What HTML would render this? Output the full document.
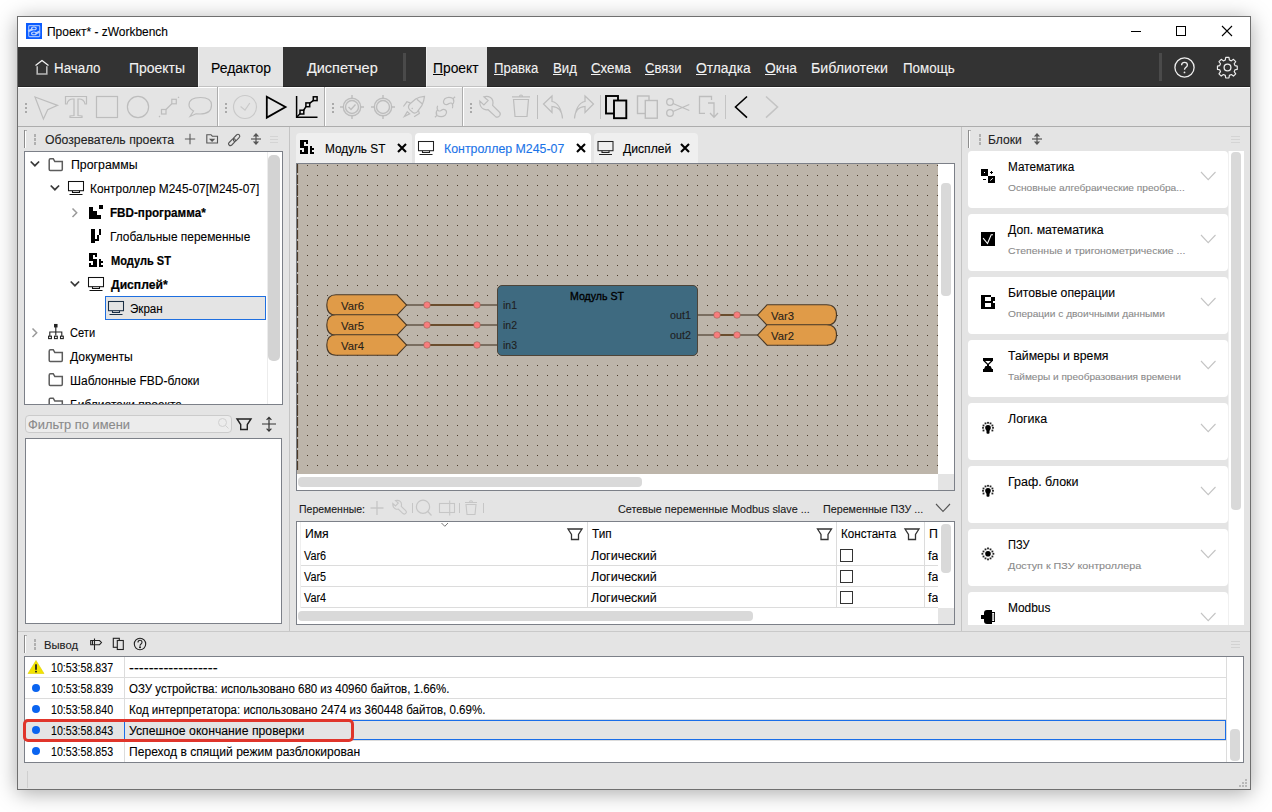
<!DOCTYPE html>
<html><head><meta charset="utf-8">
<style>
*{box-sizing:border-box;margin:0;padding:0}
html,body{width:1272px;height:812px;overflow:hidden;background:#fff;font-family:"Liberation Sans",sans-serif;color:#000}
.a{position:absolute}
.t{position:absolute;white-space:nowrap;line-height:1;-webkit-text-stroke:0.1px currentColor}
.b{-webkit-text-stroke:0.2px currentColor}
u{text-decoration:underline;text-underline-offset:1px;text-decoration-thickness:1px}
svg{position:absolute;overflow:visible}
</style></head><body>
<div class="a" style="left:17px;top:16px;width:1234px;height:774px;box-shadow:0 3px 20px rgba(0,0,0,0.34);background:#e4e4e4;border:1px solid #6f6f6f"></div>
<div class="a" style="left:18px;top:17px;width:1232px;height:30px;background:#fff;"></div>
<svg style="left:26px;top:23px;" width="16" height="16" viewBox="0 0 16 16"><rect x="0" y="0" width="16" height="16" fill="#0b5cff"/><rect x="2.7" y="2.6" width="11" height="11" rx="0.8" fill="none" stroke="#9fbfff" stroke-width="1.1"/><path d="M2.2 8.3 L6.5 6.3 M9.8 10.5 L13.8 8.6" stroke="#b7d0ff" stroke-width="2.2"/><ellipse cx="7.9" cy="5.4" rx="2.3" ry="1.4" fill="none" stroke="#c8dbff" stroke-width="1.1"/><ellipse cx="7.9" cy="10.4" rx="2.3" ry="1.4" fill="none" stroke="#c8dbff" stroke-width="1.1"/></svg>
<div class="t" style="left:47px;top:25.84px;font-size:12px;color:#000;transform:scaleX(0.9972);transform-origin:0 0;">Проект* - zWorkbench</div>
<div class="a" style="left:1131px;top:31px;width:10px;height:1px;background:#000;"></div>
<div class="a" style="left:1176px;top:26px;width:10px;height:10px;background:transparent;border:1px solid #000"></div>
<svg style="left:1222px;top:26px;" width="10" height="10" viewBox="0 0 10 10"><path d="M0 0L10 10M10 0L0 10" stroke="#000" stroke-width="1.1"/></svg>
<div class="a" style="left:18px;top:47px;width:1232px;height:40px;background:#333;border-bottom:1px solid #252525"></div>
<div class="a" style="left:198px;top:47px;width:85px;height:40px;background:#e4e4e4;border-bottom:1px solid #c2c2c2;border-left:1px solid #f0f0f0"></div>
<div class="a" style="left:426px;top:47px;width:61px;height:40px;background:#e4e4e4;border-bottom:1px solid #c2c2c2;border-left:1px solid #f0f0f0"></div>
<svg style="left:0px;top:0px;" width="1" height="1" viewBox="0 0 1 1"><path d="M35.5 65.5 L42 60.5 L48.5 65.5" fill="none" stroke="#f2f2f2" stroke-width="1.3" stroke-linejoin="round"/><path d="M37.2 66.3 L37.2 74 L46.8 74 L46.8 66.3" fill="none" stroke="#b8b8b8" stroke-width="1.6"/></svg>
<div class="t" style="left:54px;top:61.15px;font-size:14px;color:#f2f2f2;transform:scaleX(0.9532);transform-origin:0 0;">Начало</div>
<div class="t" style="left:129px;top:61.15px;font-size:14px;color:#f2f2f2;transform:scaleX(0.9967);transform-origin:0 0;">Проекты</div>
<div class="t" style="left:210.5px;top:61.15px;font-size:14px;color:#000;transform:scaleX(0.9956);transform-origin:0 0;">Редактор</div>
<div class="t" style="left:306.7px;top:61.15px;font-size:14px;color:#f2f2f2;transform:scaleX(1.0324);transform-origin:0 0;">Диспетчер</div>
<div class="a" style="left:403px;top:53px;width:3px;height:28px;background:#4a4a4a;"></div>
<div class="t" style="left:433px;top:61.15px;font-size:14px;color:#000;transform:scaleX(0.9886);transform-origin:0 0;"><u>П</u>роект</div>
<div class="t" style="left:494px;top:61.15px;font-size:14px;color:#f2f2f2;transform:scaleX(0.9366);transform-origin:0 0;"><u>П</u>равка</div>
<div class="t" style="left:553px;top:61.15px;font-size:14px;color:#f2f2f2;transform:scaleX(0.9397);transform-origin:0 0;"><u>В</u>ид</div>
<div class="t" style="left:591px;top:61.15px;font-size:14px;color:#f2f2f2;transform:scaleX(0.9489);transform-origin:0 0;"><u>С</u>хема</div>
<div class="t" style="left:645px;top:61.15px;font-size:14px;color:#f2f2f2;transform:scaleX(0.9307);transform-origin:0 0;"><u>С</u>вязи</div>
<div class="t" style="left:696px;top:61.15px;font-size:14px;color:#f2f2f2;transform:scaleX(0.9884);transform-origin:0 0;"><u>О</u>тладка</div>
<div class="t" style="left:765px;top:61.15px;font-size:14px;color:#f2f2f2;transform:scaleX(0.9832);transform-origin:0 0;"><u>О</u>кна</div>
<div class="t" style="left:811.3px;top:61.15px;font-size:14px;color:#f2f2f2;transform:scaleX(1.0150);transform-origin:0 0;">Библиотеки</div>
<div class="t" style="left:903.3px;top:61.15px;font-size:14px;color:#f2f2f2;transform:scaleX(0.9560);transform-origin:0 0;">Помощь</div>
<div class="a" style="left:1159px;top:53px;width:3px;height:28px;background:#4a4a4a;"></div>
<svg style="left:1174px;top:57px;" width="21" height="21" viewBox="0 0 21 21"><circle cx="10.5" cy="10.5" r="9.6" fill="none" stroke="#eee" stroke-width="1.3"/><path d="M7.6 8.2 Q7.6 5.3 10.5 5.3 Q13.4 5.3 13.4 8 Q13.4 9.6 11.6 10.6 Q10.5 11.3 10.5 12.8" fill="none" stroke="#eee" stroke-width="1.3"/><circle cx="10.5" cy="15.4" r="0.9" fill="#eee"/></svg>
<svg style="left:1217px;top:57px;" width="22" height="22" viewBox="0 0 22 22"><path d="M9.2 1 L12.8 1 L13.3 3.9 L15.4 4.8 L17.8 3.1 L20.3 5.6 L18.6 8 L19.5 10.1 L22 10.6 L22 14.2 L19.5 14.7 L18.6 16.8 L20.3 19.2 L17.8 21.7 L15.4 20 L13.3 20.9 L12.8 23.8 L9.2 23.8 L8.7 20.9 L6.6 20 L4.2 21.7 L1.7 19.2 L3.4 16.8 L2.5 14.7 L0 14.2 L0 10.6 L2.5 10.1 L3.4 8 L1.7 5.6 L4.2 3.1 L6.6 4.8 L8.7 3.9 Z" transform="scale(0.9) translate(0.5,-0.5)" fill="none" stroke="#eee" stroke-width="1.3" stroke-linejoin="round"/><circle cx="10.5" cy="10.5" r="3.4" fill="none" stroke="#eee" stroke-width="1.3"/></svg>
<div class="a" style="left:18px;top:87px;width:1232px;height:40px;background:#e4e4e4;border-top:1px solid #fff;border-bottom:1px solid #adadad"></div>
<div class="a" style="left:217px;top:87px;width:1px;height:39px;background:#adadad;"></div>
<div class="a" style="left:218px;top:87px;width:1px;height:39px;background:#fff;"></div>
<div class="a" style="left:324px;top:87px;width:1px;height:39px;background:#adadad;"></div>
<div class="a" style="left:325px;top:87px;width:1px;height:39px;background:#fff;"></div>
<div class="a" style="left:462px;top:87px;width:1px;height:39px;background:#adadad;"></div>
<div class="a" style="left:463px;top:87px;width:1px;height:39px;background:#fff;"></div>
<div class="a" style="left:25px;top:103px;width:2px;height:2px;background:#a9a9a9;"></div>
<div class="a" style="left:25px;top:107px;width:2px;height:2px;background:#a9a9a9;"></div>
<div class="a" style="left:25px;top:111px;width:2px;height:2px;background:#a9a9a9;"></div>
<div class="a" style="left:225px;top:103px;width:2px;height:2px;background:#a9a9a9;"></div>
<div class="a" style="left:225px;top:107px;width:2px;height:2px;background:#a9a9a9;"></div>
<div class="a" style="left:225px;top:111px;width:2px;height:2px;background:#a9a9a9;"></div>
<div class="a" style="left:332px;top:103px;width:2px;height:2px;background:#a9a9a9;"></div>
<div class="a" style="left:332px;top:107px;width:2px;height:2px;background:#a9a9a9;"></div>
<div class="a" style="left:332px;top:111px;width:2px;height:2px;background:#a9a9a9;"></div>
<div class="a" style="left:470px;top:103px;width:2px;height:2px;background:#a9a9a9;"></div>
<div class="a" style="left:470px;top:107px;width:2px;height:2px;background:#a9a9a9;"></div>
<div class="a" style="left:470px;top:111px;width:2px;height:2px;background:#a9a9a9;"></div>
<svg style="left:0px;top:0px;" width="1" height="1" viewBox="0 0 1 1"><g fill="none" stroke="#bdbdbd" stroke-width="1.2" stroke-linejoin="miter"><path d="M35 97 L57.5 105.4 L47.7 109.7 L43.4 119 Z"/></g></svg>
<svg style="left:0px;top:0px;" width="1" height="1" viewBox="0 0 1 1"><g fill="none" stroke="#bdbdbd" stroke-width="1.2" stroke-linejoin="miter"><path d="M65.5 104 L65.5 96.5 L86.5 96.5 L86.5 104 L85 104 Q84 99 79 99 L78 99 L78 115.5 L82 116 L82 117.5 L70 117.5 L70 116 L74 115.5 L74 99 L73 99 Q68 99 67 104 Z"/></g></svg>
<svg style="left:0px;top:0px;" width="1" height="1" viewBox="0 0 1 1"><g fill="none" stroke="#bdbdbd" stroke-width="1.2" stroke-linejoin="miter"><rect x="96.5" y="96.5" width="21" height="21"/></g></svg>
<svg style="left:0px;top:0px;" width="1" height="1" viewBox="0 0 1 1"><g fill="none" stroke="#bdbdbd" stroke-width="1.2" stroke-linejoin="miter"><circle cx="138" cy="107" r="10.6"/></g></svg>
<svg style="left:0px;top:0px;" width="1" height="1" viewBox="0 0 1 1"><g fill="none" stroke="#bdbdbd" stroke-width="1.2" stroke-linejoin="miter"><rect x="161.5" y="109.5" width="4.5" height="4.5"/><rect x="171.8" y="99.3" width="4.5" height="4.5"/><path d="M166 109.5 L171.8 103.8"/><path d="M159 117 L160 116 M178 97.8 L179 96.8"/></g></svg>
<svg style="left:0px;top:0px;" width="1" height="1" viewBox="0 0 1 1"><g fill="none" stroke="#bdbdbd" stroke-width="1.2" stroke-linejoin="miter"><path d="M190 116.5 L193.5 111 Q189 108.5 189 105 Q189 97.5 200.5 97.5 Q211.5 97.5 211.5 105 Q211.5 114 200 114 L196 113.8 Z"/></g></svg>
<svg style="left:0px;top:0px;" width="1" height="1" viewBox="0 0 1 1"><g fill="none" stroke="#c9c9c9" stroke-width="1.2" stroke-linejoin="miter"><circle cx="245" cy="107" r="11.5"/><path d="M240.6 106.5 L245 110.2 L249.8 103"/></g></svg>
<svg style="left:0px;top:0px;" width="1" height="1" viewBox="0 0 1 1"><g fill="none" stroke="#000" stroke-width="1.8" stroke-linejoin="miter"><path d="M266.8 96.8 L285.5 107 L266.8 117.6 Z"/></g></svg>
<svg style="left:0px;top:0px;" width="1" height="1" viewBox="0 0 1 1"><g fill="none" stroke="#000" stroke-width="1.5" stroke-linejoin="miter"><path d="M296.6 96 L296.6 117.2 L317.5 117.2"/><path d="M296.8 117 L300.3 113.5 M303.5 110.5 L306.3 106.2 M309.5 103.3 L313.5 100.3"/><rect x="300" y="110.2" width="3.8" height="3.8"/><rect x="305.9" y="102.9" width="3.8" height="3.8"/><rect x="313.3" y="96.8" width="3.8" height="3.8"/></g></svg>
<svg style="left:0px;top:0px;" width="1" height="1" viewBox="0 0 1 1"><g fill="none" stroke="#bdbdbd" stroke-width="1.4" stroke-linejoin="miter"><circle cx="352" cy="107" r="8.7"/><circle cx="352" cy="107" r="6.5"/><path d="M352 95 L352 98.3 M352 115.7 L352 119 M340 107 L343.3 107 M360.7 107 L364 107"/></g></svg>
<svg style="left:0px;top:0px;" width="1" height="1" viewBox="0 0 1 1"><g fill="none" stroke="#bdbdbd" stroke-width="1.4" stroke-linejoin="miter"><circle cx="383" cy="107" r="8.7"/><circle cx="383" cy="107" r="6.5"/><path d="M383 95 L383 98.3 M383 115.7 L383 119 M371 107 L374.3 107 M391.7 107 L395 107"/></g></svg>
<svg style="left:0px;top:0px;" width="1" height="1" viewBox="0 0 1 1"><g fill="none" stroke="#bdbdbd" stroke-width="1.4" stroke-linejoin="miter"><path d="M348.5 107 L351 109.5 L355.5 104.5"/></g></svg>
<svg style="left:0px;top:0px;" width="1" height="1" viewBox="0 0 1 1"><g fill="none" stroke="#bdbdbd" stroke-width="1.2" stroke-linejoin="miter"><path d="M424.5 96.4 Q419 96.8 415.6 99 L409.8 104 Q407.2 106.8 409.6 109.6 L412.6 112.3 Q415 114 417.2 111.8 L421.8 105.6 Q424 101.5 424.5 96.4 Z M416.9 99.2 L422.1 103.7 M411.8 107.8 L412.6 109 M403.4 106.5 L406.9 101.8 L410.2 102.9 M414.1 116.8 L419.3 113.4 L418.5 110.4 M404.3 116.6 L407.3 111.7 L409.7 113.8 Z"/></g></svg>
<svg style="left:0px;top:0px;" width="1" height="1" viewBox="0 0 1 1"><g fill="none" stroke="#bdbdbd" stroke-width="1.2" stroke-linejoin="miter"><path d="M455.1 96.8 L453.1 98.6 Q448.5 96 444.8 98.8 Q442.3 101.8 444.5 104 Q446.5 105.5 449 103.6 Q451.5 102 452.5 104.5 Q453.2 106.5 452.4 108.3 M453.1 98.6 Q454.8 101.5 452.5 104.5 M434.9 117.2 L436.9 115.4 Q441.5 118 445.2 115.2 Q447.7 112.2 445.5 110 Q443.5 108.5 441 110.4 Q438.5 112 437.5 109.5 Q436.8 107.5 437.6 105.7 M436.9 115.4 Q435.2 112.5 437.5 109.5"/></g></svg>
<svg style="left:0px;top:0px;" width="1" height="1" viewBox="0 0 1 1"><g fill="none" stroke="#bdbdbd" stroke-width="1.2" stroke-linejoin="miter"><path d="M483.9 96.8 L488.1 100.6 L483.9 104.9 L479.8 101.1 Q479.5 107 483.5 109 Q486 110.2 488.1 109.7 L495.3 116.4 Q498 118.2 499.8 115.5 Q501 113.5 499.3 112 L492.6 105.4 Q494 100 490.5 97.5 Q487.5 95.8 483.9 96.8 Z"/></g></svg>
<svg style="left:0px;top:0px;" width="1" height="1" viewBox="0 0 1 1"><g fill="none" stroke="#bdbdbd" stroke-width="1.2" stroke-linejoin="miter"><path d="M512 96.8 L530 96.8 M519.5 96.8 Q519.5 95 521 95 Q522.5 95 522.5 96.8 M513.5 99.5 L515 116.5 L527 116.5 L528.5 99.5 Z"/></g></svg>
<div class="a" style="left:537px;top:95px;width:1px;height:24px;background:#bdbdbd;"></div>
<svg style="left:0px;top:0px;" width="1" height="1" viewBox="0 0 1 1"><g fill="none" stroke="#bdbdbd" stroke-width="1.2" stroke-linejoin="miter"><path d="M562.5 118.5 Q562 107 552 106.5 L552 112.5 L543.5 104 L552 96 L552 101.5 Q560.5 103 562.5 118.5"/></g></svg>
<svg style="left:0px;top:0px;" width="1" height="1" viewBox="0 0 1 1"><g fill="none" stroke="#bdbdbd" stroke-width="1.2" stroke-linejoin="miter"><path d="M574.5 118.5 Q575 107 585 106.5 L585 112.5 L593.5 104 L585 96 L585 101.5 Q576.5 103 574.5 118.5"/></g></svg>
<div class="a" style="left:600px;top:95px;width:1px;height:24px;background:#c4c4c4;"></div>
<svg style="left:0px;top:0px;" width="1" height="1" viewBox="0 0 1 1"><g fill="none" stroke="#000" stroke-width="1.9" stroke-linejoin="miter"><rect x="606" y="96" width="12" height="17.5"/><rect x="614" y="100.5" width="12.3" height="17.7" fill="#e4e4e4"/></g></svg>
<svg style="left:0px;top:0px;" width="1" height="1" viewBox="0 0 1 1"><g fill="none" stroke="#bdbdbd" stroke-width="1.4" stroke-linejoin="miter"><rect x="637.5" y="96" width="11.5" height="17.5"/><rect x="645.3" y="100.5" width="12" height="17.7" fill="#e4e4e4"/></g></svg>
<svg style="left:0px;top:0px;" width="1" height="1" viewBox="0 0 1 1"><g fill="none" stroke="#bdbdbd" stroke-width="1.3" stroke-linejoin="miter"><circle cx="670" cy="102" r="3.3"/><circle cx="670" cy="113" r="3.3"/><path d="M673 103.5 L689.3 110.5 M673 111.5 L689.3 104.5"/></g></svg>
<svg style="left:0px;top:0px;" width="1" height="1" viewBox="0 0 1 1"><g fill="none" stroke="#bdbdbd" stroke-width="1.3" stroke-linejoin="miter"><path d="M711.5 100 L711.5 96.5 L699.5 96.5 L699.5 113.3 L705 113.3 M708 103 L714 103 L714 117 M710 113 L714 117.3 L718 113"/></g></svg>
<div class="a" style="left:725px;top:95px;width:1px;height:24px;background:#c4c4c4;"></div>
<svg style="left:0px;top:0px;" width="1" height="1" viewBox="0 0 1 1"><g fill="none" stroke="#000" stroke-width="1.6" stroke-linejoin="miter"><path d="M747 96.5 L735.5 107 L747 117.7"/></g></svg>
<svg style="left:0px;top:0px;" width="1" height="1" viewBox="0 0 1 1"><g fill="none" stroke="#c4c4c4" stroke-width="1.6" stroke-linejoin="miter"><path d="M766 96.5 L777.5 107 L766 117.7"/></g></svg>
<div class="a" style="left:24px;top:130px;width:1px;height:18px;background:#8c8c8c;"></div>
<div class="a" style="left:25px;top:131px;width:1px;height:17px;background:#fff;"></div>
<div class="a" style="left:25px;top:130px;width:2px;height:1px;background:#b0b0b0;"></div>
<div class="a" style="left:34px;top:134px;width:2px;height:3px;background:#b0b0b0;"></div>
<div class="a" style="left:34px;top:138px;width:2px;height:3px;background:#b0b0b0;"></div>
<div class="a" style="left:34px;top:142px;width:2px;height:3px;background:#b0b0b0;"></div>
<div class="t" style="left:44.6px;top:133.59px;font-size:12.3px;color:#222;transform:scaleX(0.9958);transform-origin:0 0;">Обозреватель проекта</div>
<svg style="left:0px;top:0px;" width="1" height="1" viewBox="0 0 1 1"><g fill="none" stroke="#5a5a5a" stroke-width="1.1" stroke-linejoin="miter"><path d="M190 133.7 L190 144.2 M184.9 139 L195.2 139"/></g></svg>
<svg style="left:0px;top:0px;" width="1" height="1" viewBox="0 0 1 1"><g fill="none" stroke="#555" stroke-width="1.1" stroke-linejoin="miter"><path d="M206.8 143 L206.8 134.7 L211 134.7 L212.3 136.2 L217.5 136.2 L217.5 143 Z"/><path d="M210.2 139.3 L214 139.3 L212.1 141.3 Z" fill="#444"/></g></svg>
<svg style="left:0px;top:0px;" width="1" height="1" viewBox="0 0 1 1"><g fill="none" stroke="#555" stroke-width="1.1" stroke-linejoin="miter"><path d="M233.5 138.2 L236.5 135 Q238 133.6 239.3 134.9 Q240.5 136.2 239.1 137.6 L236.2 140.6 Q234.8 142 233.5 140.6 Z M229.2 142.5 L232.2 139.3 Q233.6 137.9 234.9 139.2 Q236.2 140.5 234.8 141.9 L231.8 145 Q230.4 146.3 229.1 145 Q227.8 143.7 229.2 142.5 Z"/></g></svg>
<svg style="left:0px;top:0px;" width="1" height="1" viewBox="0 0 1 1"><g fill="none" stroke="#555" stroke-width="1.2" stroke-linejoin="miter"><path d="M251 139 L261 139"/><path d="M254.2 135.8 L256 133.8 L257.8 135.8 Z M254.2 142.2 L256 144.2 L257.8 142.2 Z" fill="#555"/><path d="M256 135.8 L256 142.2"/></g></svg>
<div class="a" style="left:270px;top:136px;width:8px;height:1px;background:#d4d4d4;"></div>
<div class="a" style="left:270px;top:139px;width:8px;height:1px;background:#d4d4d4;"></div>
<div class="a" style="left:270px;top:142px;width:8px;height:1px;background:#d4d4d4;"></div>
<div class="a" style="left:24px;top:151px;width:259px;height:254px;background:#fff;border:1px solid #7c8088"></div>
<div class="a" style="left:267px;top:152px;width:1px;height:252px;background:#ececec;"></div>
<div class="a" style="left:268px;top:155px;width:12px;height:206px;background:#d3d3d3;border-radius:5px"></div>
<svg style="left:0px;top:0px;" width="1" height="1" viewBox="0 0 1 1"><g fill="none" stroke="#3a3a3a" stroke-width="1.7" stroke-linejoin="miter"><path d="M30.7 161.5 L34.9 165.7 L39.1 161.5"/></g></svg>
<svg style="left:0px;top:0px;" width="1" height="1" viewBox="0 0 1 1"><g fill="none" stroke="#5c5c5c" stroke-width="1.5" stroke-linejoin="miter"><path d="M49.2 169.3 L49.2 160.2 Q49.2 158.7 50.5 158.7 L53.2 158.7 L54.8 161.4 L62.3 161.4 L62.3 169.3 Q62.3 170.4 61.3 170.4 L50.2 170.4 Q49.2 170.4 49.2 169.3 Z"/></g></svg>
<div class="t" style="left:70.7px;top:158.59px;font-size:12.3px;color:#000;transform:scaleX(1.0024);transform-origin:0 0;">Программы</div>
<svg style="left:0px;top:0px;" width="1" height="1" viewBox="0 0 1 1"><g fill="none" stroke="#3a3a3a" stroke-width="1.7" stroke-linejoin="miter"><path d="M50.7 185.5 L54.9 189.7 L59.1 185.5"/></g></svg>
<svg style="left:0px;top:0px;" width="1" height="1" viewBox="0 0 1 1"><g fill="none" stroke="#111" stroke-width="1.05" stroke-linejoin="miter"><rect x="68.5" y="181.5" width="15" height="9.2"/><path d="M72.5 190.8 L72.5 192.5 L79.5 192.5 L79.5 190.8 M69.5 194.5 L82.5 194.5"/></g></svg>
<div class="t" style="left:90.2px;top:182.59px;font-size:12.3px;color:#000;transform:scaleX(0.9658);transform-origin:0 0;">Контроллер M245-07[M245-07]</div>
<svg style="left:0px;top:0px;" width="1" height="1" viewBox="0 0 1 1"><g fill="none" stroke="#9a9a9a" stroke-width="1.5" stroke-linejoin="miter"><path d="M72.5 208.5 L76.7 212.8 L72.5 217.1"/></g></svg>
<svg style="left:89px;top:205px;" width="15" height="14" viewBox="0 0 15 14"><path d="M0 2 L4 2 L4 6 L8 6 L8 10 L12 10 L12 14 L0 14 Z M10 0 L14 0 L14 4 L10 4 Z" fill="#000"/></svg>
<div class="t b" style="left:110.4px;top:206.59px;font-size:12.3px;color:#000;font-weight:700;transform:scaleX(0.9480);transform-origin:0 0;">FBD-программа*</div>
<svg style="left:91px;top:229px;" width="10" height="14" viewBox="0 0 10 14"><rect x="0" y="0" width="4" height="14" fill="#000"/><rect x="8" y="0" width="2" height="6" fill="#000"/><rect x="6" y="6" width="2" height="6" fill="#000"/><rect x="4" y="10" width="2" height="2" fill="#000"/></svg>
<div class="t" style="left:110.4px;top:230.59px;font-size:12.3px;color:#000;transform:scaleX(0.9681);transform-origin:0 0;">Глобальные переменные</div>
<svg style="left:89px;top:253px;" width="15" height="14" viewBox="0 0 15 14"><rect x="0" y="0" width="8" height="2" fill="#000"/><rect x="0" y="2" width="4" height="2" fill="#000"/><rect x="6" y="2" width="2" height="2" fill="#000"/><rect x="0" y="4" width="4" height="2" fill="#000"/><rect x="0" y="6" width="8" height="2" fill="#000"/><rect x="4" y="8" width="4" height="2" fill="#000"/><rect x="0" y="10" width="2" height="2" fill="#000"/><rect x="4" y="10" width="4" height="2" fill="#000"/><rect x="0" y="12" width="8" height="2" fill="#000"/><rect x="10" y="6" width="2" height="8" fill="#000"/><rect x="12" y="8" width="2" height="2" fill="#000"/><rect x="12" y="12" width="2" height="2" fill="#000"/></svg>
<div class="t b" style="left:110.5px;top:254.59px;font-size:12.3px;color:#000;font-weight:700;transform:scaleX(0.8991);transform-origin:0 0;">Модуль ST</div>
<svg style="left:0px;top:0px;" width="1" height="1" viewBox="0 0 1 1"><g fill="none" stroke="#3a3a3a" stroke-width="1.7" stroke-linejoin="miter"><path d="M70.7 281.5 L74.9 285.7 L79.1 281.5"/></g></svg>
<svg style="left:0px;top:0px;" width="1" height="1" viewBox="0 0 1 1"><g fill="none" stroke="#111" stroke-width="1.05" stroke-linejoin="miter"><rect x="88.5" y="277.5" width="15" height="9.2"/><path d="M92.5 286.8 L92.5 288.5 L99.5 288.5 L99.5 286.8 M89.5 290.5 L102.5 290.5"/></g></svg>
<div class="t b" style="left:110.5px;top:278.59px;font-size:12.3px;color:#000;font-weight:700;transform:scaleX(0.9874);transform-origin:0 0;">Дисплей*</div>
<div class="a" style="left:105px;top:296px;width:161px;height:24px;background:#e4e4e4;border:1px solid #1e6fe0"></div>
<svg style="left:0px;top:0px;" width="1" height="1" viewBox="0 0 1 1"><g fill="none" stroke="#1b2f45" stroke-width="1.05" stroke-linejoin="miter"><rect x="108.5" y="301.5" width="15" height="9.2"/><path d="M112.5 310.8 L112.5 312.5 L119.5 312.5 L119.5 310.8 M109.5 314.5 L122.5 314.5"/></g></svg>
<div class="t" style="left:130px;top:302.59px;font-size:12.3px;color:#000;transform:scaleX(0.9427);transform-origin:0 0;">Экран</div>
<svg style="left:0px;top:0px;" width="1" height="1" viewBox="0 0 1 1"><g fill="none" stroke="#9a9a9a" stroke-width="1.5" stroke-linejoin="miter"><path d="M32.5 328.5 L36.7 332.8 L32.5 337.1"/></g></svg>
<svg style="left:0px;top:0px;" width="1" height="1" viewBox="0 0 1 1"><g fill="none" stroke="#222" stroke-width="1.1" stroke-linejoin="miter"><path d="M55.8 327 L55.8 335.5 M49.8 336 L49.8 332 L61.8 332 L61.8 336"/><rect x="48.6" y="336.2" width="2.8" height="2.4"/><rect x="54.5" y="336.2" width="2.8" height="2.4"/><rect x="60.5" y="336.2" width="2.8" height="2.4"/><rect x="54.6" y="324.5" width="2.4" height="2.4" fill="#222"/></g></svg>
<div class="t" style="left:70.2px;top:326.59px;font-size:12.3px;color:#000;transform:scaleX(0.9025);transform-origin:0 0;">Сети</div>
<svg style="left:0px;top:0px;" width="1" height="1" viewBox="0 0 1 1"><g fill="none" stroke="#5c5c5c" stroke-width="1.5" stroke-linejoin="miter"><path d="M49.2 360.3 L49.2 351.2 Q49.2 349.7 50.5 349.7 L53.2 349.7 L54.8 352.4 L62.3 352.4 L62.3 360.3 Q62.3 361.4 61.3 361.4 L50.2 361.4 Q49.2 361.4 49.2 360.3 Z"/></g></svg>
<div class="t" style="left:70px;top:350.59px;font-size:12.3px;color:#000;transform:scaleX(0.9891);transform-origin:0 0;">Документы</div>
<svg style="left:0px;top:0px;" width="1" height="1" viewBox="0 0 1 1"><g fill="none" stroke="#5c5c5c" stroke-width="1.5" stroke-linejoin="miter"><path d="M49.2 384.3 L49.2 375.2 Q49.2 373.7 50.5 373.7 L53.2 373.7 L54.8 376.4 L62.3 376.4 L62.3 384.3 Q62.3 385.4 61.3 385.4 L50.2 385.4 Q49.2 385.4 49.2 384.3 Z"/></g></svg>
<div class="t" style="left:70px;top:374.59px;font-size:12.3px;color:#000;transform:scaleX(0.9736);transform-origin:0 0;">Шаблонные FBD-блоки</div>
<div class="a" style="left:25px;top:395px;width:242px;height:9px;overflow:hidden">
<svg style="left:0px;top:0px;" width="1" height="1" viewBox="0 0 1 1"><g fill="none" stroke="#5c5c5c" stroke-width="1.5" stroke-linejoin="miter"><path d="M24.2 13.8 L24.2 4.7 Q24.2 3.2 25.5 3.2 L28.2 3.2 L29.8 5.9 L37.3 5.9 L37.3 13.8 Q37.3 14.9 36.3 14.9 L25.2 14.9 Q24.2 14.9 24.2 13.8 Z"/></g></svg>
<div class="t" style="left:45px;top:3.59px;font-size:12.3px;color:#000;transform:scaleX(0.9733);transform-origin:0 0;">Библиотеки проекта</div>
</div>
<div class="a" style="left:25px;top:415px;width:207px;height:18px;background:#ececec;border:1px solid #cbcbcb;border-radius:4px"></div>
<div class="t" style="left:28px;top:418.84px;font-size:12px;color:#8a8a8a;transform:scaleX(1.0724);transform-origin:0 0;">Фильтр по имени</div>
<svg style="left:0px;top:0px;" width="1" height="1" viewBox="0 0 1 1"><g fill="none" stroke="#d0d0d0" stroke-width="1" stroke-linejoin="miter"><circle cx="222.5" cy="422.5" r="4"/><path d="M225.5 425.5 L228.5 428.5"/></g></svg>
<svg style="left:0px;top:0px;" width="1" height="1" viewBox="0 0 1 1"><g fill="none" stroke="#222" stroke-width="1.4" stroke-linejoin="miter"><path d="M237 419 L251 419 L247.3 424.5 L247.3 429.5 L240.7 429.5 L240.7 424.5 Z"/></g></svg>
<svg style="left:0px;top:0px;" width="1" height="1" viewBox="0 0 1 1"><g fill="none" stroke="#333" stroke-width="1.2" stroke-linejoin="miter"><path d="M269 417.5 L269 431 M262 424 L276 424 M266.6 419.8 L269 417.3 L271.4 419.8 M266.6 428.7 L269 431.2 L271.4 428.7"/></g></svg>
<div class="a" style="left:25px;top:438px;width:257px;height:186px;background:#fff;border:1px solid #7c8088"></div>
<div class="a" style="left:18px;top:631px;width:1232px;height:1px;background:#c9c9c9;"></div>
<div class="a" style="left:289px;top:127px;width:1px;height:504px;background:#c4c4c4;"></div>
<div class="a" style="left:961px;top:127px;width:1px;height:504px;background:#c4c4c4;"></div>
<div class="a" style="left:296px;top:133px;width:116px;height:30px;background:#efefef;border-radius:4px 4px 0 0"></div>
<div class="a" style="left:415px;top:133px;width:176px;height:30px;background:#fff;border-radius:4px 4px 0 0"></div>
<div class="a" style="left:594px;top:133px;width:104px;height:30px;background:#efefef;border-radius:4px 4px 0 0"></div>
<svg style="left:300px;top:140px;" width="15" height="15" viewBox="0 0 15 15"><rect x="0" y="0" width="8" height="2" fill="#000"/><rect x="0" y="2" width="4" height="2" fill="#000"/><rect x="6" y="2" width="2" height="2" fill="#000"/><rect x="0" y="4" width="4" height="2" fill="#000"/><rect x="0" y="6" width="8" height="2" fill="#000"/><rect x="4" y="8" width="4" height="2" fill="#000"/><rect x="0" y="10" width="2" height="2" fill="#000"/><rect x="4" y="10" width="4" height="2" fill="#000"/><rect x="0" y="12" width="8" height="2" fill="#000"/><rect x="10" y="6" width="2" height="8" fill="#000"/><rect x="12" y="8" width="2" height="2" fill="#000"/><rect x="12" y="12" width="2" height="2" fill="#000"/></svg>
<div class="t" style="left:325.3px;top:142.59px;font-size:12.3px;color:#000;transform:scaleX(0.9646);transform-origin:0 0;">Модуль ST</div>
<svg style="left:0px;top:0px;" width="1" height="1" viewBox="0 0 1 1"><g fill="none" stroke="#000" stroke-width="2.1" stroke-linejoin="miter"><path d="M398 144 L406 152 M406 144 L398 152"/></g></svg>
<svg style="left:0px;top:0px;" width="1" height="1" viewBox="0 0 1 1"><g fill="none" stroke="#222" stroke-width="1.05" stroke-linejoin="miter"><rect x="418.5" y="141.5" width="15" height="9.2"/><path d="M422.5 150.8 L422.5 152.5 L429.5 152.5 L429.5 150.8 M419.5 154.5 L432.5 154.5"/></g></svg>
<div class="t" style="left:444.2px;top:142.59px;font-size:12.3px;color:#1a73e8;transform:scaleX(1.0041);transform-origin:0 0;">Контроллер M245-07</div>
<svg style="left:0px;top:0px;" width="1" height="1" viewBox="0 0 1 1"><g fill="none" stroke="#000" stroke-width="2.1" stroke-linejoin="miter"><path d="M577 144 L585 152 M585 144 L577 152"/></g></svg>
<svg style="left:0px;top:0px;" width="1" height="1" viewBox="0 0 1 1"><g fill="none" stroke="#222" stroke-width="1.05" stroke-linejoin="miter"><rect x="598.0" y="141.5" width="15" height="9.2"/><path d="M602.0 150.8 L602.0 152.5 L609.0 152.5 L609.0 150.8 M599.0 154.5 L612.0 154.5"/></g></svg>
<div class="t" style="left:623px;top:142.59px;font-size:12.3px;color:#000;transform:scaleX(0.9879);transform-origin:0 0;">Дисплей</div>
<svg style="left:0px;top:0px;" width="1" height="1" viewBox="0 0 1 1"><g fill="none" stroke="#000" stroke-width="2.1" stroke-linejoin="miter"><path d="M681 144 L689 152 M689 144 L681 152"/></g></svg>
<div class="a" style="left:296px;top:163px;width:659px;height:328px;background:#fff;border:1px solid #7c8088"></div>
<svg style="left:297px;top:164px" width="641" height="310" viewBox="0 0 641 310">
<defs><pattern id="dots" x="0" y="0" width="10" height="10" patternUnits="userSpaceOnUse">
<rect x="10" y="1" width="1" height="1" fill="#4b3b2a"/><rect x="0" y="1" width="1" height="1" fill="#4b3b2a"/></pattern></defs>
<rect x="0" y="0" width="641" height="310" fill="#bdb5aa"/>
<rect x="0" y="0" width="641" height="310" fill="url(#dots)"/>
</svg>
<svg style="left:297px;top:164px" width="2" height="310"><line x1="0.5" y1="0" x2="0.5" y2="308" stroke="#4b3a28" stroke-width="1.2" stroke-dasharray="9 2"/></svg>
<div class="a" style="left:941px;top:183px;width:10px;height:113px;background:#d9d9d9;border-radius:4px"></div>
<div class="a" style="left:298px;top:477px;width:344px;height:10px;background:#d9d9d9;border-radius:4px"></div>
<div class="a" style="left:938px;top:474px;width:16px;height:16px;background:#e4e4e4;"></div>
<div class="a" style="left:406px;top:304px;width:92px;height:2px;background:#7a6e60;"></div>
<div class="a" style="left:427px;top:304px;width:50px;height:2px;background:#6b4e2e;"></div>
<svg style="left:0px;top:0px;" width="1" height="1" viewBox="0 0 1 1"><circle cx="427" cy="305" r="3.3" fill="#f77d7d" stroke="#8a5a4a" stroke-width="0.5"/></svg>
<svg style="left:0px;top:0px;" width="1" height="1" viewBox="0 0 1 1"><circle cx="477" cy="305" r="3.3" fill="#f77d7d" stroke="#8a5a4a" stroke-width="0.5"/></svg>
<div class="a" style="left:406px;top:324px;width:92px;height:2px;background:#7a6e60;"></div>
<div class="a" style="left:427px;top:324px;width:50px;height:2px;background:#6b4e2e;"></div>
<svg style="left:0px;top:0px;" width="1" height="1" viewBox="0 0 1 1"><circle cx="427" cy="325" r="3.3" fill="#f77d7d" stroke="#8a5a4a" stroke-width="0.5"/></svg>
<svg style="left:0px;top:0px;" width="1" height="1" viewBox="0 0 1 1"><circle cx="477" cy="325" r="3.3" fill="#f77d7d" stroke="#8a5a4a" stroke-width="0.5"/></svg>
<div class="a" style="left:406px;top:344px;width:92px;height:2px;background:#7a6e60;"></div>
<div class="a" style="left:427px;top:344px;width:50px;height:2px;background:#6b4e2e;"></div>
<svg style="left:0px;top:0px;" width="1" height="1" viewBox="0 0 1 1"><circle cx="427" cy="345" r="3.3" fill="#f77d7d" stroke="#8a5a4a" stroke-width="0.5"/></svg>
<svg style="left:0px;top:0px;" width="1" height="1" viewBox="0 0 1 1"><circle cx="477" cy="345" r="3.3" fill="#f77d7d" stroke="#8a5a4a" stroke-width="0.5"/></svg>
<div class="a" style="left:697px;top:314px;width:61px;height:2px;background:#7a6e60;"></div>
<div class="a" style="left:717px;top:314px;width:20px;height:2px;background:#6b4e2e;"></div>
<svg style="left:0px;top:0px;" width="1" height="1" viewBox="0 0 1 1"><circle cx="717" cy="315" r="3.3" fill="#f77d7d" stroke="#8a5a4a" stroke-width="0.5"/></svg>
<svg style="left:0px;top:0px;" width="1" height="1" viewBox="0 0 1 1"><circle cx="737" cy="315" r="3.3" fill="#f77d7d" stroke="#8a5a4a" stroke-width="0.5"/></svg>
<div class="a" style="left:697px;top:334px;width:61px;height:2px;background:#7a6e60;"></div>
<div class="a" style="left:717px;top:334px;width:20px;height:2px;background:#6b4e2e;"></div>
<svg style="left:0px;top:0px;" width="1" height="1" viewBox="0 0 1 1"><circle cx="717" cy="335" r="3.3" fill="#f77d7d" stroke="#8a5a4a" stroke-width="0.5"/></svg>
<svg style="left:0px;top:0px;" width="1" height="1" viewBox="0 0 1 1"><circle cx="737" cy="335" r="3.3" fill="#f77d7d" stroke="#8a5a4a" stroke-width="0.5"/></svg>
<svg style="left:326px;top:295px;" width="82" height="21" viewBox="0 0 82 21"><path d="M10 -0.2 L71 -0.2 L80.6 10.1 L71 20.2 L10 20.2 Q0.8 20.2 0.8 10.1 Q0.8 -0.2 10 -0.2 Z" fill="#e09b48" stroke="#4a3a28" stroke-width="1.1"/></svg>
<div class="t" style="left:341px;top:300.52px;font-size:11.2px;color:#2a2218;transform:scaleX(1.0082);transform-origin:0 0;">Var6</div>
<svg style="left:326px;top:315px;" width="82" height="21" viewBox="0 0 82 21"><path d="M10 -0.2 L71 -0.2 L80.6 10.1 L71 20.2 L10 20.2 Q0.8 20.2 0.8 10.1 Q0.8 -0.2 10 -0.2 Z" fill="#e09b48" stroke="#4a3a28" stroke-width="1.1"/></svg>
<div class="t" style="left:341px;top:320.52px;font-size:11.2px;color:#2a2218;transform:scaleX(1.0082);transform-origin:0 0;">Var5</div>
<svg style="left:326px;top:335px;" width="82" height="21" viewBox="0 0 82 21"><path d="M10 -0.2 L71 -0.2 L80.6 10.1 L71 20.2 L10 20.2 Q0.8 20.2 0.8 10.1 Q0.8 -0.2 10 -0.2 Z" fill="#e09b48" stroke="#4a3a28" stroke-width="1.1"/></svg>
<div class="t" style="left:341px;top:340.52px;font-size:11.2px;color:#2a2218;transform:scaleX(1.0082);transform-origin:0 0;">Var4</div>
<svg style="left:757px;top:305px;" width="82" height="21" viewBox="0 0 82 21"><path d="M0.5 10.1 L10 -0.2 L69.5 -0.2 Q79.5 -0.2 79.5 10.1 Q79.5 20.2 69.5 20.2 L10 20.2 Z" fill="#e09b48" stroke="#4a3a28" stroke-width="1.1"/></svg>
<div class="t" style="left:771px;top:310.52px;font-size:11.2px;color:#2a2218;transform:scaleX(1.0082);transform-origin:0 0;">Var3</div>
<svg style="left:757px;top:325px;" width="82" height="21" viewBox="0 0 82 21"><path d="M0.5 10.1 L10 -0.2 L69.5 -0.2 Q79.5 -0.2 79.5 10.1 Q79.5 20.2 69.5 20.2 L10 20.2 Z" fill="#e09b48" stroke="#4a3a28" stroke-width="1.1"/></svg>
<div class="t" style="left:771px;top:330.52px;font-size:11.2px;color:#2a2218;transform:scaleX(1.0082);transform-origin:0 0;">Var2</div>
<div class="a" style="left:497px;top:285px;width:201px;height:71px;background:#3e6a80;border:1.2px solid #4d4438;border-radius:5px"></div>
<div class="t" style="left:570px;top:290.69px;font-size:11px;color:#000;transform:scaleX(0.9624);transform-origin:0 0;-webkit-text-stroke:0.35px currentColor;">Модуль ST</div>
<div class="t" style="left:503px;top:299.69px;font-size:11px;color:#1e1e1e;transform:scaleX(0.9532);transform-origin:0 0;">in1</div>
<div class="t" style="left:503px;top:319.69px;font-size:11px;color:#1e1e1e;transform:scaleX(0.9532);transform-origin:0 0;">in2</div>
<div class="t" style="left:503px;top:339.69px;font-size:11px;color:#1e1e1e;transform:scaleX(0.9532);transform-origin:0 0;">in3</div>
<div class="t" style="left:670px;top:309.69px;font-size:11px;color:#1e1e1e;transform:scaleX(0.9803);transform-origin:0 0;">out1</div>
<div class="t" style="left:670px;top:329.69px;font-size:11px;color:#1e1e1e;transform:scaleX(0.9803);transform-origin:0 0;">out2</div>
<div class="t" style="left:298.7px;top:503.86px;font-size:10.8px;color:#1a1a1a;transform:scaleX(0.9719);transform-origin:0 0;">Переменные:</div>
<svg style="left:0px;top:0px;" width="1" height="1" viewBox="0 0 1 1"><g fill="none" stroke="#c6c6c6" stroke-width="1.3" stroke-linejoin="miter"><path d="M377 501 L377 515 M370.5 508 L383.5 508"/></g></svg>
<svg style="left:0px;top:0px;" width="1" height="1" viewBox="0 0 1 1"><g transform="translate(392.6,500.3) scale(0.66) translate(-479.5,-96.3)"><path d="M483.9 96.8 L488.1 100.6 L483.9 104.9 L479.8 101.1 Q479.5 107 483.5 109 Q486 110.2 488.1 109.7 L495.3 116.4 Q498 118.2 499.8 115.5 Q501 113.5 499.3 112 L492.6 105.4 Q494 100 490.5 97.5 Q487.5 95.8 483.9 96.8 Z" fill="none" stroke="#c6c6c6" stroke-width="1.7"/></g></svg>
<div class="a" style="left:412px;top:503px;width:1px;height:10px;background:#c6c6c6;"></div>
<svg style="left:0px;top:0px;" width="1" height="1" viewBox="0 0 1 1"><g fill="none" stroke="#c6c6c6" stroke-width="1.2" stroke-linejoin="miter"><circle cx="423" cy="506.8" r="6.6"/><path d="M427.8 511.5 L431.5 515.5"/></g></svg>
<svg style="left:0px;top:0px;" width="1" height="1" viewBox="0 0 1 1"><g fill="none" stroke="#c6c6c6" stroke-width="1.1" stroke-linejoin="miter"><rect x="439.5" y="503.5" width="15" height="9"/><path d="M449.7 500.5 L449.7 515.5"/></g></svg>
<div class="a" style="left:459px;top:503px;width:1px;height:10px;background:#c6c6c6;"></div>
<svg style="left:0px;top:0px;" width="1" height="1" viewBox="0 0 1 1"><g fill="none" stroke="#c6c6c6" stroke-width="1.1" stroke-linejoin="miter"><path d="M465 502.5 L477 502.5 M469.5 502.5 Q469.5 500.7 471 500.7 Q472.5 500.7 472.5 502.5 M466 504.5 L467 514.5 L475 514.5 L476 504.5 Z"/></g></svg>
<div class="a" style="left:483px;top:503px;width:1px;height:10px;background:#c6c6c6;"></div>
<div class="t" style="left:617.8px;top:503.86px;font-size:10.8px;color:#1a1a1a;transform:scaleX(1.0017);transform-origin:0 0;">Сетевые переменные Modbus slave ...</div>
<div class="t" style="left:823.3px;top:503.86px;font-size:10.8px;color:#1a1a1a;transform:scaleX(0.9938);transform-origin:0 0;">Переменные ПЗУ ...</div>
<svg style="left:0px;top:0px;" width="1" height="1" viewBox="0 0 1 1"><g fill="none" stroke="#555" stroke-width="1.1" stroke-linejoin="miter"><path d="M936 504 L943 511.5 L950 504"/></g></svg>
<div class="a" style="left:296px;top:521px;width:659px;height:104px;background:#fff;border:1px solid #7c8088"></div>
<div class="a" style="left:300px;top:522px;width:1px;height:86px;background:#efefef;"></div>
<div class="a" style="left:587px;top:522px;width:1px;height:86px;background:#dcdcdc;"></div>
<div class="a" style="left:836px;top:522px;width:1px;height:86px;background:#dcdcdc;"></div>
<div class="a" style="left:924px;top:522px;width:1px;height:86px;background:#dcdcdc;"></div>
<div class="a" style="left:301px;top:565px;width:637px;height:1px;background:#dcdcdc;"></div>
<div class="a" style="left:301px;top:586px;width:637px;height:1px;background:#dcdcdc;"></div>
<div class="a" style="left:301px;top:607px;width:637px;height:1px;background:#dcdcdc;"></div>
<svg style="left:0px;top:0px;" width="1" height="1" viewBox="0 0 1 1"><g fill="none" stroke="#777" stroke-width="1" stroke-linejoin="miter"><path d="M441.5 523 L444.8 526.3 L448 523"/></g></svg>
<div class="t" style="left:305.2px;top:527.59px;font-size:12.3px;color:#000;transform:scaleX(0.9894);transform-origin:0 0;">Имя</div>
<svg style="left:0px;top:0px;" width="1" height="1" viewBox="0 0 1 1"><g fill="none" stroke="#333" stroke-width="1.3" stroke-linejoin="miter"><path d="M568 529 L582 529 L578.5 534.5 L578.5 539.5 L571.5 539.5 L571.5 534.5 Z"/></g></svg>
<svg style="left:0px;top:0px;" width="1" height="1" viewBox="0 0 1 1"><g fill="none" stroke="#333" stroke-width="1.3" stroke-linejoin="miter"><path d="M817.5 529 L831.5 529 L828.0 534.5 L828.0 539.5 L821.0 539.5 L821.0 534.5 Z"/></g></svg>
<svg style="left:0px;top:0px;" width="1" height="1" viewBox="0 0 1 1"><g fill="none" stroke="#333" stroke-width="1.3" stroke-linejoin="miter"><path d="M905 529 L919 529 L915.5 534.5 L915.5 539.5 L908.5 539.5 L908.5 534.5 Z"/></g></svg>
<div class="t" style="left:591.9px;top:527.59px;font-size:12.3px;color:#000;transform:scaleX(0.9561);transform-origin:0 0;">Тип</div>
<div class="t" style="left:841px;top:527.59px;font-size:12.3px;color:#000;transform:scaleX(0.9451);transform-origin:0 0;">Константа</div>
<div class="a" style="left:925px;top:522px;width:13px;height:86px;overflow:hidden">
<div class="t" style="left:4px;top:5.59px;font-size:12.3px;color:#000;">П</div>
<div class="t" style="left:3px;top:27.59px;font-size:12.3px;color:#000;">fa</div>
<div class="t" style="left:3px;top:48.59px;font-size:12.3px;color:#000;">fa</div>
<div class="t" style="left:3px;top:69.59px;font-size:12.3px;color:#000;">fa</div>
</div>
<div class="t" style="left:304.3px;top:549.59px;font-size:12.3px;color:#000;transform:scaleX(0.8778);transform-origin:0 0;">Var6</div>
<div class="t" style="left:591.2px;top:549.59px;font-size:12.3px;color:#000;transform:scaleX(1.0142);transform-origin:0 0;">Логический</div>
<div class="a" style="left:840px;top:549px;width:13px;height:13px;background:#fff;border:1px solid #333"></div>
<div class="t" style="left:304.3px;top:570.59px;font-size:12.3px;color:#000;transform:scaleX(0.8778);transform-origin:0 0;">Var5</div>
<div class="t" style="left:591.2px;top:570.59px;font-size:12.3px;color:#000;transform:scaleX(1.0142);transform-origin:0 0;">Логический</div>
<div class="a" style="left:840px;top:570px;width:13px;height:13px;background:#fff;border:1px solid #333"></div>
<div class="t" style="left:304.3px;top:591.59px;font-size:12.3px;color:#000;transform:scaleX(0.8778);transform-origin:0 0;">Var4</div>
<div class="t" style="left:591.2px;top:591.59px;font-size:12.3px;color:#000;transform:scaleX(1.0142);transform-origin:0 0;">Логический</div>
<div class="a" style="left:840px;top:591px;width:13px;height:13px;background:#fff;border:1px solid #333"></div>
<div class="a" style="left:938px;top:522px;width:16px;height:102px;background:#fff;"></div>
<div class="a" style="left:941px;top:524px;width:10px;height:49px;background:#d9d9d9;border-radius:4px"></div>
<div class="a" style="left:938px;top:608px;width:16px;height:16px;background:#e4e4e4;"></div>
<div class="a" style="left:298px;top:611px;width:455px;height:10px;background:#d9d9d9;border-radius:4px"></div>
<div class="a" style="left:968px;top:130px;width:1px;height:18px;background:#8c8c8c;"></div>
<div class="a" style="left:969px;top:131px;width:1px;height:17px;background:#fff;"></div>
<div class="a" style="left:969px;top:130px;width:2px;height:1px;background:#b0b0b0;"></div>
<div class="a" style="left:979px;top:134px;width:2px;height:3px;background:#b0b0b0;"></div>
<div class="a" style="left:979px;top:138px;width:2px;height:3px;background:#b0b0b0;"></div>
<div class="a" style="left:979px;top:142px;width:2px;height:3px;background:#b0b0b0;"></div>
<div class="t" style="left:987.8px;top:133.59px;font-size:12.3px;color:#222;transform:scaleX(0.9842);transform-origin:0 0;">Блоки</div>
<svg style="left:0px;top:0px;" width="1" height="1" viewBox="0 0 1 1"><g fill="none" stroke="#555" stroke-width="1.2" stroke-linejoin="miter"><path d="M1032 139 L1042 139"/><path d="M1035.2 135.8 L1037 133.8 L1038.8 135.8 Z M1035.2 142.2 L1037 144.2 L1038.8 142.2 Z" fill="#555"/><path d="M1037 135.8 L1037 142.2"/></g></svg>
<div class="a" style="left:1231px;top:136px;width:9px;height:1px;background:#d4d4d4;"></div>
<div class="a" style="left:1231px;top:139px;width:9px;height:1px;background:#d4d4d4;"></div>
<div class="a" style="left:1231px;top:142px;width:9px;height:1px;background:#d4d4d4;"></div>
<div class="a" style="left:968px;top:151px;width:276px;height:474px;overflow:hidden">
<div class="a" style="left:0px;top:0px;width:260px;height:57px;background:#fff;border-radius:4px"></div>
<svg style="left:0px;top:0px;" width="1" height="1" viewBox="0 0 1 1"><rect x="13" y="18" width="7" height="7" fill="#000"/><rect x="16" y="21" width="1" height="1" fill="#fff"/><rect x="23" y="20" width="1" height="3" fill="#000"/><rect x="22" y="21" width="3" height="1" fill="#000"/><rect x="15" y="28" width="3" height="1" fill="#000"/><rect x="20" y="25" width="7" height="7" fill="#000"/><path d="M22.3 29.5 L24.8 27.3" stroke="#fff" stroke-width="1"/></svg>
<div class="t" style="left:40px;top:9.59px;font-size:12.3px;color:#000;transform:scaleX(0.9553);transform-origin:0 0;">Математика</div>
<div class="t" style="left:40px;top:31.70px;font-size:9.8px;color:#8a8a8a;transform:scaleX(1.0348);transform-origin:0 0;-webkit-text-stroke:0.1px currentColor;">Основные алгебраические преобра...</div>
<svg style="left:0px;top:0px;" width="1" height="1" viewBox="0 0 1 1"><g fill="none" stroke="#c4c4c4" stroke-width="1.1" stroke-linejoin="miter"><path d="M233 21 L240.2 28.6 L247.5 21"/></g></svg>
<div class="a" style="left:0px;top:63px;width:260px;height:57px;background:#fff;border-radius:4px"></div>
<svg style="left:0px;top:0px;" width="1" height="1" viewBox="0 0 1 1"><rect x="13" y="81" width="14" height="14" fill="#000"/><path d="M15.1 87.1 L19.5 92.5 L23.2 83.8 L25 83.8" fill="none" stroke="#fff" stroke-width="1.1"/></svg>
<div class="t" style="left:40px;top:72.59px;font-size:12.3px;color:#000;transform:scaleX(0.9941);transform-origin:0 0;">Доп. математика</div>
<div class="t" style="left:40px;top:94.70px;font-size:9.8px;color:#8a8a8a;transform:scaleX(1.0695);transform-origin:0 0;-webkit-text-stroke:0.1px currentColor;">Степенные и тригонометрические ...</div>
<svg style="left:0px;top:0px;" width="1" height="1" viewBox="0 0 1 1"><g fill="none" stroke="#c4c4c4" stroke-width="1.1" stroke-linejoin="miter"><path d="M233 84 L240.2 91.6 L247.5 84"/></g></svg>
<div class="a" style="left:0px;top:126px;width:260px;height:57px;background:#fff;border-radius:4px"></div>
<svg style="left:0px;top:0px;" width="1" height="1" viewBox="0 0 1 1"><rect x="13" y="144" width="10" height="2" fill="#000"/><rect x="13" y="144" width="4" height="14" fill="#000"/><rect x="23" y="146" width="4" height="4" fill="#000"/><rect x="17" y="150" width="8" height="2" fill="#000"/><rect x="23" y="152" width="4" height="6" fill="#000"/><rect x="13" y="156" width="14" height="2" fill="#000"/></svg>
<div class="t" style="left:40px;top:135.59px;font-size:12.3px;color:#000;transform:scaleX(0.9944);transform-origin:0 0;">Битовые операции</div>
<div class="t" style="left:40px;top:157.70px;font-size:9.8px;color:#8a8a8a;transform:scaleX(1.0354);transform-origin:0 0;-webkit-text-stroke:0.1px currentColor;">Операции с двоичными данными</div>
<svg style="left:0px;top:0px;" width="1" height="1" viewBox="0 0 1 1"><g fill="none" stroke="#c4c4c4" stroke-width="1.1" stroke-linejoin="miter"><path d="M233 147 L240.2 154.6 L247.5 147"/></g></svg>
<div class="a" style="left:0px;top:189px;width:260px;height:57px;background:#fff;border-radius:4px"></div>
<svg style="left:0px;top:0px;" width="1" height="1" viewBox="0 0 1 1"><rect x="15" y="207" width="10" height="3" fill="#000"/><rect x="15" y="218" width="10" height="3" fill="#000"/><path d="M16 209.8 L20 213.7 L24 209.8" fill="none" stroke="#000" stroke-width="1.3"/><path d="M16 218 L17.5 215 L22.5 215 L24 218 Z" fill="#000"/><rect x="19" y="213.3" width="2" height="1.7" fill="#000"/></svg>
<div class="t" style="left:40px;top:198.59px;font-size:12.3px;color:#000;transform:scaleX(0.9983);transform-origin:0 0;">Таймеры и время</div>
<div class="t" style="left:40px;top:220.70px;font-size:9.8px;color:#8a8a8a;transform:scaleX(1.0263);transform-origin:0 0;-webkit-text-stroke:0.1px currentColor;">Таймеры и преобразования времени</div>
<svg style="left:0px;top:0px;" width="1" height="1" viewBox="0 0 1 1"><g fill="none" stroke="#c4c4c4" stroke-width="1.1" stroke-linejoin="miter"><path d="M233 210 L240.2 217.6 L247.5 210"/></g></svg>
<div class="a" style="left:0px;top:252px;width:260px;height:57px;background:#fff;border-radius:4px"></div>
<svg style="left:0px;top:0px;" width="1" height="1" viewBox="0 0 1 1"><circle cx="20" cy="276.8" r="2.8" fill="#000"/><rect x="18.5" y="278.3" width="3" height="4.4" rx="1" fill="#000"/><rect x="19.1" y="270.90000000000003" width="1.8" height="1.8" fill="#222"/><rect x="16.6" y="271.50000000000006" width="1.8" height="1.8" fill="#222"/><rect x="21.6" y="271.50000000000006" width="1.8" height="1.8" fill="#222"/><rect x="14.6" y="273.6" width="1.8" height="1.8" fill="#222"/><rect x="23.5" y="273.6" width="1.8" height="1.8" fill="#222"/><rect x="14.1" y="275.90000000000003" width="1.8" height="1.8" fill="#222"/><rect x="24.1" y="275.90000000000003" width="1.8" height="1.8" fill="#222"/><rect x="14.6" y="278.6" width="1.8" height="1.8" fill="#222"/><rect x="23.5" y="278.6" width="1.8" height="1.8" fill="#222"/></svg>
<div class="t" style="left:40px;top:261.59px;font-size:12.3px;color:#000;transform:scaleX(1.0086);transform-origin:0 0;">Логика</div>
<svg style="left:0px;top:0px;" width="1" height="1" viewBox="0 0 1 1"><g fill="none" stroke="#c4c4c4" stroke-width="1.1" stroke-linejoin="miter"><path d="M233 273 L240.2 280.6 L247.5 273"/></g></svg>
<div class="a" style="left:0px;top:315px;width:260px;height:57px;background:#fff;border-radius:4px"></div>
<svg style="left:0px;top:0px;" width="1" height="1" viewBox="0 0 1 1"><circle cx="20" cy="339.8" r="2.8" fill="#000"/><rect x="18.5" y="341.3" width="3" height="4.4" rx="1" fill="#000"/><rect x="19.1" y="333.90000000000003" width="1.8" height="1.8" fill="#222"/><rect x="16.6" y="334.50000000000006" width="1.8" height="1.8" fill="#222"/><rect x="21.6" y="334.50000000000006" width="1.8" height="1.8" fill="#222"/><rect x="14.6" y="336.6" width="1.8" height="1.8" fill="#222"/><rect x="23.5" y="336.6" width="1.8" height="1.8" fill="#222"/><rect x="14.1" y="338.90000000000003" width="1.8" height="1.8" fill="#222"/><rect x="24.1" y="338.90000000000003" width="1.8" height="1.8" fill="#222"/><rect x="14.6" y="341.6" width="1.8" height="1.8" fill="#222"/><rect x="23.5" y="341.6" width="1.8" height="1.8" fill="#222"/></svg>
<div class="t" style="left:40px;top:324.59px;font-size:12.3px;color:#000;transform:scaleX(1.0144);transform-origin:0 0;">Граф. блоки</div>
<svg style="left:0px;top:0px;" width="1" height="1" viewBox="0 0 1 1"><g fill="none" stroke="#c4c4c4" stroke-width="1.1" stroke-linejoin="miter"><path d="M233 336 L240.2 343.6 L247.5 336"/></g></svg>
<div class="a" style="left:0px;top:378px;width:260px;height:57px;background:#fff;border-radius:4px"></div>
<svg style="left:0px;top:0px;" width="1" height="1" viewBox="0 0 1 1"><circle cx="20" cy="402.8" r="2.8" fill="#000"/><rect x="19.1" y="396.50000000000006" width="1.8" height="1.8" fill="#222"/><rect x="19.1" y="407.50000000000006" width="1.8" height="1.8" fill="#222"/><rect x="13.5" y="401.90000000000003" width="1.8" height="1.8" fill="#222"/><rect x="24.5" y="401.90000000000003" width="1.8" height="1.8" fill="#222"/><rect x="16.6" y="397.50000000000006" width="1.8" height="1.8" fill="#222"/><rect x="21.6" y="397.50000000000006" width="1.8" height="1.8" fill="#222"/><rect x="14.6" y="399.6" width="1.8" height="1.8" fill="#222"/><rect x="23.5" y="399.6" width="1.8" height="1.8" fill="#222"/><rect x="14.6" y="404.6" width="1.8" height="1.8" fill="#222"/><rect x="23.5" y="404.6" width="1.8" height="1.8" fill="#222"/><rect x="16.6" y="406.50000000000006" width="1.8" height="1.8" fill="#222"/><rect x="21.6" y="406.50000000000006" width="1.8" height="1.8" fill="#222"/></svg>
<div class="t" style="left:40px;top:387.59px;font-size:12.3px;color:#000;transform:scaleX(0.8976);transform-origin:0 0;">ПЗУ</div>
<div class="t" style="left:40px;top:409.70px;font-size:9.8px;color:#8a8a8a;transform:scaleX(1.0952);transform-origin:0 0;-webkit-text-stroke:0.1px currentColor;">Доступ к ПЗУ контроллера</div>
<svg style="left:0px;top:0px;" width="1" height="1" viewBox="0 0 1 1"><g fill="none" stroke="#c4c4c4" stroke-width="1.1" stroke-linejoin="miter"><path d="M233 399 L240.2 406.6 L247.5 399"/></g></svg>
<div class="a" style="left:0px;top:441px;width:260px;height:57px;background:#fff;border-radius:4px"></div>
<svg style="left:0px;top:0px;" width="1" height="1" viewBox="0 0 1 1"><rect x="13" y="464" width="3" height="4" fill="#000"/><path d="M19 459 L24 459 L24 473 L19 473 Q16 473 16 470 L16 462 Q16 459 19 459 Z" fill="#000"/><rect x="24" y="461" width="3" height="10" fill="#000"/><rect x="24.2" y="462" width="1.9" height="8" fill="#fff"/><path d="M24 464 L26.2 464 M24 466 L26.2 466 M24 468 L26.2 468" stroke="#888" stroke-width="0.9"/></svg>
<div class="t" style="left:40px;top:450.59px;font-size:12.3px;color:#000;transform:scaleX(0.9691);transform-origin:0 0;">Modbus</div>
<div class="t" style="left:40px;top:472.70px;font-size:9.8px;color:#8a8a8a;transform:scaleX(0.9747);transform-origin:0 0;-webkit-text-stroke:0.1px currentColor;">Обмен данными по протоколу Modbus</div>
<svg style="left:0px;top:0px;" width="1" height="1" viewBox="0 0 1 1"><g fill="none" stroke="#c4c4c4" stroke-width="1.1" stroke-linejoin="miter"><path d="M233 462 L240.2 469.6 L247.5 462"/></g></svg>
<div class="a" style="left:260px;top:0px;width:16px;height:474px;background:#fff;"></div>
<div class="a" style="left:260px;top:0px;width:1px;height:474px;background:#f0f0f0;"></div>
<div class="a" style="left:263px;top:1px;width:10px;height:358px;background:#d9d9d9;border-radius:4px"></div>
</div>
<div class="a" style="left:24px;top:635px;width:1px;height:18px;background:#8c8c8c;"></div>
<div class="a" style="left:25px;top:636px;width:1px;height:17px;background:#fff;"></div>
<div class="a" style="left:25px;top:635px;width:2px;height:1px;background:#b0b0b0;"></div>
<div class="a" style="left:34px;top:639px;width:2px;height:3px;background:#b0b0b0;"></div>
<div class="a" style="left:34px;top:643px;width:2px;height:3px;background:#b0b0b0;"></div>
<div class="a" style="left:34px;top:647px;width:2px;height:3px;background:#b0b0b0;"></div>
<div class="t" style="left:44.3px;top:639.18px;font-size:11.6px;color:#222;transform:scaleX(0.9697);transform-origin:0 0;">Вывод</div>
<svg style="left:0px;top:0px;" width="1" height="1" viewBox="0 0 1 1"><g fill="none" stroke="#222" stroke-width="1.1" stroke-linejoin="miter"><path d="M94.5 638.5 L94.5 650 M90.7 640.5 L99.5 640.5 L101.5 642.6 L99.5 644.7 L90.7 644.7 Z M92.5 640.5 L92.5 644.7"/></g></svg>
<svg style="left:0px;top:0px;" width="1" height="1" viewBox="0 0 1 1"><g fill="none" stroke="#222" stroke-width="1.1" stroke-linejoin="miter"><rect x="113.3" y="638.3" width="6" height="9"/><rect x="117.3" y="640.5" width="6" height="9" fill="#e4e4e4"/></g></svg>
<svg style="left:0px;top:0px;" width="1" height="1" viewBox="0 0 1 1"><g fill="none" stroke="#222" stroke-width="1.1" stroke-linejoin="miter"><circle cx="140" cy="644" r="5.7"/><path d="M138 642.5 Q138 640.3 140 640.3 Q142 640.3 142 642.3 Q142 643.5 140.8 644.2 Q140 644.8 140 645.8"/><circle cx="140" cy="647.3" r="0.5"/></g></svg>
<div class="a" style="left:1231px;top:641px;width:9px;height:1px;background:#d2d2d2;"></div>
<div class="a" style="left:1231px;top:644px;width:9px;height:1px;background:#d2d2d2;"></div>
<div class="a" style="left:1231px;top:647px;width:9px;height:1px;background:#d2d2d2;"></div>
<div class="a" style="left:24px;top:656px;width:1220px;height:107px;background:#fff;border:1px solid #7c8088"></div>
<div class="a" style="left:25px;top:677px;width:1201px;height:1px;background:#dcdcdc;"></div>
<div class="a" style="left:25px;top:698px;width:1201px;height:1px;background:#dcdcdc;"></div>
<div class="a" style="left:25px;top:719px;width:1201px;height:1px;background:#dcdcdc;"></div>
<div class="a" style="left:25px;top:740px;width:1201px;height:1px;background:#dcdcdc;"></div>
<div class="a" style="left:124px;top:657px;width:1px;height:105px;background:#dcdcdc;"></div>
<div class="a" style="left:1226px;top:657px;width:1px;height:105px;background:#dcdcdc;"></div>
<div class="a" style="left:25px;top:720px;width:1201px;height:20px;background:#e4e4e4;"></div>
<div class="a" style="left:124px;top:720px;width:1102px;height:20px;background:transparent;border:1px solid #1a6ee8"></div>
<div class="a" style="left:1230px;top:729px;width:10px;height:32px;background:#d9d9d9;border-radius:4px"></div>
<svg style="left:28px;top:660px;" width="17" height="14" viewBox="0 0 17 14"><path d="M8 0.5 L16 13.5 L0 13.5 Z" fill="#f2e300" stroke="#e0d000" stroke-width="0.6" stroke-linejoin="round"/><rect x="7.1" y="4.3" width="1.8" height="5.5" fill="#222"/><rect x="7.1" y="10.8" width="1.8" height="1.6" fill="#222"/></svg>
<div class="a" style="left:32px;top:684px;width:8px;height:8px;border-radius:50%;background:#0a64f0"></div>
<div class="a" style="left:32px;top:705px;width:8px;height:8px;border-radius:50%;background:#0a64f0"></div>
<div class="a" style="left:32px;top:726px;width:8px;height:8px;border-radius:50%;background:#0a64f0"></div>
<div class="a" style="left:32px;top:747px;width:8px;height:8px;border-radius:50%;background:#0a64f0"></div>
<div class="t" style="left:50.6px;top:661.59px;font-size:12.3px;color:#000;transform:scaleX(0.8648);transform-origin:0 0;">10:53:58.837</div>
<div class="t" style="left:128.6px;top:661.59px;font-size:12.3px;color:#000;transform:scaleX(1.2019);transform-origin:0 0;">------------------</div>
<div class="t" style="left:50.6px;top:682.59px;font-size:12.3px;color:#000;transform:scaleX(0.8648);transform-origin:0 0;">10:53:58.839</div>
<div class="t" style="left:128.6px;top:682.59px;font-size:12.3px;color:#000;transform:scaleX(0.9351);transform-origin:0 0;">ОЗУ устройства: использовано 680 из 40960 байтов, 1.66%.</div>
<div class="t" style="left:50.6px;top:703.59px;font-size:12.3px;color:#000;transform:scaleX(0.8648);transform-origin:0 0;">10:53:58.840</div>
<div class="t" style="left:128.6px;top:703.59px;font-size:12.3px;color:#000;transform:scaleX(0.9378);transform-origin:0 0;">Код интерпретатора: использовано 2474 из 360448 байтов, 0.69%.</div>
<div class="t" style="left:50.6px;top:724.59px;font-size:12.3px;color:#000;transform:scaleX(0.8648);transform-origin:0 0;">10:53:58.843</div>
<div class="t" style="left:128.6px;top:724.59px;font-size:12.3px;color:#000;transform:scaleX(0.9949);transform-origin:0 0;">Успешное окончание проверки</div>
<div class="t" style="left:50.6px;top:745.59px;font-size:12.3px;color:#000;transform:scaleX(0.8648);transform-origin:0 0;">10:53:58.853</div>
<div class="t" style="left:128.6px;top:745.59px;font-size:12.3px;color:#000;transform:scaleX(0.9834);transform-origin:0 0;">Переход в спящий режим разблокирован</div>
<div class="a" style="left:23px;top:719px;width:331px;height:23px;border:3px solid #e0352b;border-radius:5px"></div>
<div class="a" style="left:27px;top:771px;width:1px;height:17px;background:#cfcfcf;"></div>
<div class="a" style="left:1245px;top:779px;width:2px;height:2px;background:#b8b8b8;"></div>
<div class="a" style="left:1242px;top:782px;width:2px;height:2px;background:#b8b8b8;"></div>
<div class="a" style="left:1245px;top:782px;width:2px;height:2px;background:#b8b8b8;"></div>
<div class="a" style="left:1239px;top:785px;width:2px;height:2px;background:#b8b8b8;"></div>
<div class="a" style="left:1242px;top:785px;width:2px;height:2px;background:#b8b8b8;"></div>
<div class="a" style="left:1245px;top:785px;width:2px;height:2px;background:#b8b8b8;"></div>
</body></html>
